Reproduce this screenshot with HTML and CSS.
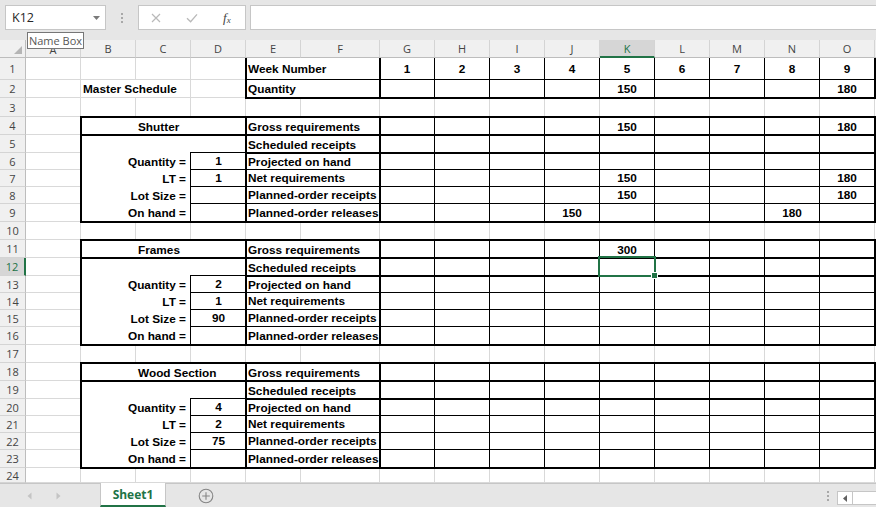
FILE: index.html
```html
<!DOCTYPE html>
<html>
<head>
<meta charset="utf-8">
<title>Sheet1</title>
<link rel="stylesheet" href="styles.css">
</head>
<body>
<div class="toolbar">
  <div class="namebox"><span>K12</span><svg class="caret" width="7" height="4" viewBox="0 0 7 4"><path d="M0 0h7L3.5 4z" fill="#7a7a7a"/></svg></div>
  <div class="grip"><i></i><i></i><i></i></div>
  <div class="fxbox">
    <svg class="ico-x" width="10" height="10" viewBox="0 0 10 10"><path d="M1 1l8 8M9 1l-8 8" stroke="#b9b9b9" stroke-width="1.2" fill="none"/></svg>
    <svg class="ico-ok" width="12" height="10" viewBox="0 0 12 10"><path d="M1 5.2l3.6 3.6L11 1.4" stroke="#b9b9b9" stroke-width="1.3" fill="none"/></svg>
    <span class="fx">f<sub>x</sub></span>
  </div>
  <div class="formula"></div>
  <div class="tip">Name Box</div>
</div>

<div class="sheet">
  <div class="corner"><svg width="8" height="8" viewBox="0 0 8 8"><path d="M8 0v8H0z" fill="#b5b5b5"/></svg></div>
  <div class="hd cA">A</div><div class="hd cB">B</div><div class="hd cC">C</div><div class="hd cD">D</div>
  <div class="hd cE">E</div><div class="hd cF">F</div><div class="hd cG">G</div><div class="hd cH">H</div>
  <div class="hd cI">I</div><div class="hd cJ">J</div><div class="hd cK on">K</div><div class="hd cL">L</div>
  <div class="hd cM">M</div><div class="hd cN">N</div><div class="hd cO">O</div><div class="hd cP"></div>

  <div class="rh y1">1</div><div class="rh y2">2</div><div class="rh y3">3</div><div class="rh y4">4</div>
  <div class="rh y5">5</div><div class="rh y6">6</div><div class="rh y7">7</div><div class="rh y8">8</div>
  <div class="rh y9">9</div><div class="rh y10">10</div><div class="rh y11">11</div><div class="rh y12 on">12</div>
  <div class="rh y13">13</div><div class="rh y14">14</div><div class="rh y15">15</div><div class="rh y16">16</div>
  <div class="rh y17">17</div><div class="rh y18">18</div><div class="rh y19">19</div><div class="rh y20">20</div>
  <div class="rh y21">21</div><div class="rh y22">22</div><div class="rh y23">23</div><div class="rh y24">24</div>

  <div class="hl y1"></div><div class="hl y2"></div><div class="hl y3"></div><div class="hl y4"></div>
  <div class="hl y5"></div><div class="hl y6"></div><div class="hl y7"></div><div class="hl y8"></div>
  <div class="hl y9"></div><div class="hl y10"></div><div class="hl y11"></div><div class="hl y12"></div>
  <div class="hl y13"></div><div class="hl y14"></div><div class="hl y15"></div><div class="hl y16"></div>
  <div class="hl y17"></div><div class="hl y18"></div><div class="hl y19"></div><div class="hl y20"></div>
  <div class="hl y21"></div><div class="hl y22"></div><div class="hl y23"></div><div class="hl y24"></div>

  <div class="vl cA"></div><div class="vl cB"></div><div class="vl cC"></div><div class="vl cD"></div>
  <div class="vl cE"></div><div class="vl cF"></div><div class="vl cG"></div><div class="vl cH"></div>
  <div class="vl cI"></div><div class="vl cJ"></div><div class="vl cK"></div><div class="vl cL"></div>
  <div class="vl cM"></div><div class="vl cN"></div><div class="vl cO"></div>

  <!-- Week table -->
  <div class="t cEF y1 bl2 br2 bb1 left">Week Number</div>
  <div class="t wk y1 br2 bb1"><span>1</span><span>2</span><span>3</span><span>4</span><span>5</span><span>6</span><span>7</span><span>8</span><span>9</span></div>
  <div class="t ms y2">Master Schedule</div>
  <div class="t cEF y2 bl2 br2 bb2 left">Quantity</div>
  <div class="t wk y2 br2 bb2"><span></span><span></span><span></span><span></span><span>150</span><span></span><span></span><span></span><span>180</span></div>

  <!-- Shutter -->
  <div class="t cBD y4 bl2 bt2 lbl">Shutter</div>
  <div class="t cEF y4 bl2 bt2 br2 left">Gross requirements</div>
  <div class="t wk y4 bt2 br2"><span></span><span></span><span></span><span></span><span>150</span><span></span><span></span><span></span><span>180</span></div>
  <div class="t cBD y5 bl2 bt2"></div>
  <div class="t cEF y5 bl2 bt2 br2 left">Scheduled receipts</div>
  <div class="t wk y5 bt2 br2"><span></span><span></span><span></span><span></span><span></span><span></span><span></span><span></span><span></span></div>
  <div class="t cBC y6 bl2 right">Quantity =</div>
  <div class="t cD y6 bl1 bt1 bb1 center">1</div>
  <div class="t cEF y6 bl2 bt2 br2 bb1 left">Projected on hand</div>
  <div class="t wk y6 bt2 br2 bb1"><span></span><span></span><span></span><span></span><span></span><span></span><span></span><span></span><span></span></div>
  <div class="t cBC y7 bl2 right">LT =</div>
  <div class="t cD y7 bl1 bb1 center">1</div>
  <div class="t cEF y7 bl2 br2 bb1 left">Net requirements</div>
  <div class="t wk y7 br2 bb1"><span></span><span></span><span></span><span></span><span>150</span><span></span><span></span><span></span><span>180</span></div>
  <div class="t cBC y8 bl2 right">Lot Size =</div>
  <div class="t cD y8 bl1 bb1 center"></div>
  <div class="t cEF y8 bl2 br2 bb1 left">Planned-order receipts</div>
  <div class="t wk y8 br2 bb1"><span></span><span></span><span></span><span></span><span>150</span><span></span><span></span><span></span><span>180</span></div>
  <div class="t cBC y9 bl2 bb2 right">On hand =</div>
  <div class="t cD y9 bl1 bb2 center"></div>
  <div class="t cEF y9 bl2 br2 bb2 left">Planned-order releases</div>
  <div class="t wk y9 br2 bb2"><span></span><span></span><span></span><span>150</span><span></span><span></span><span></span><span>180</span><span></span></div>

  <!-- Frames -->
  <div class="t cBD y11 bl2 bt2 lbl">Frames</div>
  <div class="t cEF y11 bl2 bt2 br2 left">Gross requirements</div>
  <div class="t wk y11 bt2 br2"><span></span><span></span><span></span><span></span><span>300</span><span></span><span></span><span></span><span></span></div>
  <div class="t cBD y12 bl2 bt2"></div>
  <div class="t cEF y12 bl2 bt2 br2 left">Scheduled receipts</div>
  <div class="t wk y12 bt2 br2"><span></span><span></span><span></span><span></span><span></span><span></span><span></span><span></span><span></span></div>
  <div class="t cBC y13 bl2 right">Quantity =</div>
  <div class="t cD y13 bl1 bt1 bb1 center">2</div>
  <div class="t cEF y13 bl2 bt2 br2 bb1 left">Projected on hand</div>
  <div class="t wk y13 bt2 br2 bb1"><span></span><span></span><span></span><span></span><span></span><span></span><span></span><span></span><span></span></div>
  <div class="t cBC y14 bl2 right">LT =</div>
  <div class="t cD y14 bl1 bb1 center">1</div>
  <div class="t cEF y14 bl2 br2 bb1 left">Net requirements</div>
  <div class="t wk y14 br2 bb1"><span></span><span></span><span></span><span></span><span></span><span></span><span></span><span></span><span></span></div>
  <div class="t cBC y15 bl2 right">Lot Size =</div>
  <div class="t cD y15 bl1 bb1 center">90</div>
  <div class="t cEF y15 bl2 br2 bb1 left">Planned-order receipts</div>
  <div class="t wk y15 br2 bb1"><span></span><span></span><span></span><span></span><span></span><span></span><span></span><span></span><span></span></div>
  <div class="t cBC y16 bl2 bb2 right">On hand =</div>
  <div class="t cD y16 bl1 bb2 center"></div>
  <div class="t cEF y16 bl2 br2 bb2 left">Planned-order releases</div>
  <div class="t wk y16 br2 bb2"><span></span><span></span><span></span><span></span><span></span><span></span><span></span><span></span><span></span></div>

  <!-- Wood Section -->
  <div class="t cBD y18 bl2 bt2 lbl">Wood Section</div>
  <div class="t cEF y18 bl2 bt2 br2 left">Gross requirements</div>
  <div class="t wk y18 bt2 br2"><span></span><span></span><span></span><span></span><span></span><span></span><span></span><span></span><span></span></div>
  <div class="t cBD y19 bl2 bt2"></div>
  <div class="t cEF y19 bl2 bt2 br2 left">Scheduled receipts</div>
  <div class="t wk y19 bt2 br2"><span></span><span></span><span></span><span></span><span></span><span></span><span></span><span></span><span></span></div>
  <div class="t cBC y20 bl2 right">Quantity =</div>
  <div class="t cD y20 bl1 bt1 bb1 center">4</div>
  <div class="t cEF y20 bl2 bt2 br2 bb1 left">Projected on hand</div>
  <div class="t wk y20 bt2 br2 bb1"><span></span><span></span><span></span><span></span><span></span><span></span><span></span><span></span><span></span></div>
  <div class="t cBC y21 bl2 right">LT =</div>
  <div class="t cD y21 bl1 bb1 center">2</div>
  <div class="t cEF y21 bl2 br2 bb1 left">Net requirements</div>
  <div class="t wk y21 br2 bb1"><span></span><span></span><span></span><span></span><span></span><span></span><span></span><span></span><span></span></div>
  <div class="t cBC y22 bl2 right">Lot Size =</div>
  <div class="t cD y22 bl1 bb1 center">75</div>
  <div class="t cEF y22 bl2 br2 bb1 left">Planned-order receipts</div>
  <div class="t wk y22 br2 bb1"><span></span><span></span><span></span><span></span><span></span><span></span><span></span><span></span><span></span></div>
  <div class="t cBC y23 bl2 bb2 right">On hand =</div>
  <div class="t cD y23 bl1 bb2 center"></div>
  <div class="t cEF y23 bl2 br2 bb2 left">Planned-order releases</div>
  <div class="t wk y23 br2 bb2"><span></span><span></span><span></span><span></span><span></span><span></span><span></span><span></span><span></span></div>

  <div class="sel"><i class="handle"></i></div>
</div>

<div class="tabbar">
  <div class="nav">
    <svg width="5" height="8" viewBox="0 0 5 8"><path d="M4.5 0.5v7L0.5 4z" fill="#c4c4c4"/></svg>
    <svg width="5" height="8" viewBox="0 0 5 8"><path d="M0.5 0.5v7L4.5 4z" fill="#c4c4c4"/></svg>
  </div>
  <div class="tab">Sheet1</div>
  <svg class="plus" width="16" height="16" viewBox="0 0 16 16"><circle cx="8" cy="8" r="6.8" fill="none" stroke="#858585" stroke-width="1.1"/><path d="M8 4.2v7.6M4.2 8h7.6" stroke="#858585" stroke-width="1.1"/></svg>
  <div class="spacer"></div>
  <div class="grip2"><i></i><i></i><i></i></div>
  <div class="hscroll"><div class="hbtn"><svg width="4" height="7" viewBox="0 0 4 7"><path d="M4 0v7L0 3.5z" fill="#606060"/></svg></div></div>
</div>
</body>
</html>
```

FILE: styles.css
```css
* { box-sizing: border-box; }
html, body { margin: 0; padding: 0; }
body {
  width: 876px;
  height: 507px;
  overflow: hidden;
  background: #fff;
  font-family: "Liberation Sans", Arial, sans-serif;
}

/* ---------- formula bar ---------- */
.toolbar {
  position: relative;
  height: 40px;
  background: #e6e6e6;
  display: flex;
  align-items: flex-start;
  padding: 5px 0 0 5px;
}
.namebox {
  width: 101px;
  height: 25px;
  background: #fff;
  border: 1px solid #c6c6c6;
  display: flex;
  align-items: center;
  justify-content: space-between;
  padding: 0 5px 0 6px;
  font: 12.5px "Open Sans", sans-serif;
  color: #262626;
}
.grip {
  width: 32px;
  height: 25px;
  display: flex;
  flex-direction: column;
  align-items: center;
  justify-content: center;
  gap: 2px;
}
.grip i { display: block; width: 2px; height: 2px; background: #a8a8a8; }
.fxbox {
  width: 108px;
  height: 25px;
  background: #fff;
  border: 1px solid #c6c6c6;
  display: flex;
  align-items: center;
  padding-left: 12px;
}
.ico-ok { margin-left: 25px; }
.fx {
  margin-left: 25px;
  font: italic 13px "Liberation Serif", serif;
  color: #444;
}
.fx sub { font-size: 9px; vertical-align: -1px; }
.formula {
  flex: 1;
  height: 25px;
  margin-left: 4px;
  background: #fff;
  border: 1px solid #c6c6c6;
  border-right: 0;
}
.tip {
  position: absolute;
  left: 27px;
  top: 32px;
  width: 57px;
  height: 17px;
  background: #fff;
  border: 1px solid #767676;
  font: 11px "Open Sans", sans-serif;
  white-space: nowrap;
  color: #575757;
  display: flex;
  align-items: center;
  justify-content: center;
  z-index: 10;
}

/* ---------- grid ---------- */
.sheet {
  display: grid;
  grid-template-columns: 26px repeat(5, 55px) 79px repeat(9, 55px) 1fr;
  grid-template-rows: 18px 22px 18px 19px 18px 18px 17px 17px 17px 18px 18px 18px 18px 17px 17px 17px 18px 18px 18px 18px 17px 17px 17px 18px 15px;
  height: 443px;
  overflow: hidden;
}

.cA { grid-column: 2; } .cB { grid-column: 3; } .cC { grid-column: 4; } .cD { grid-column: 5; }
.cE { grid-column: 6; } .cF { grid-column: 7; } .cG { grid-column: 8; } .cH { grid-column: 9; }
.cI { grid-column: 10; } .cJ { grid-column: 11; } .cK { grid-column: 12; } .cL { grid-column: 13; }
.cM { grid-column: 14; } .cN { grid-column: 15; } .cO { grid-column: 16; } .cP { grid-column: 17; }
.cBD { grid-column: 3 / 6; }
.cBC { grid-column: 3 / 5; }
.cEF { grid-column: 6 / 8; }
.wk { grid-column: 8 / 17; }
.ms { grid-column: 3 / 5; }

.y1 { grid-row: 2; } .y2 { grid-row: 3; } .y3 { grid-row: 4; } .y4 { grid-row: 5; }
.y5 { grid-row: 6; } .y6 { grid-row: 7; } .y7 { grid-row: 8; } .y8 { grid-row: 9; }
.y9 { grid-row: 10; } .y10 { grid-row: 11; } .y11 { grid-row: 12; } .y12 { grid-row: 13; }
.y13 { grid-row: 14; } .y14 { grid-row: 15; } .y15 { grid-row: 16; } .y16 { grid-row: 17; }
.y17 { grid-row: 18; } .y18 { grid-row: 19; } .y19 { grid-row: 20; } .y20 { grid-row: 21; }
.y21 { grid-row: 22; } .y22 { grid-row: 23; } .y23 { grid-row: 24; } .y24 { grid-row: 25; }

.corner {
  grid-row: 1;
  grid-column: 1;
  background: #f0f0f0;
  border-right: 1px solid #bdbdbd;
  border-bottom: 1px solid #bdbdbd;
  display: flex;
  align-items: flex-end;
  justify-content: flex-end;
  padding: 0 3px 3px 0;
}
.hd {
  grid-row: 1;
  background: #f0f0f0;
  border-right: 1px solid #d4d4d4;
  border-bottom: 1px solid #bdbdbd;
  display: flex;
  align-items: center;
  justify-content: center;
  font: 11px "Open Sans", sans-serif;
  color: #444;
}
.hd.cA { align-items: flex-end; }
.hd.cP { border-right: 0; }
.hd.on {
  background: #d6d6d6;
  color: #217346;
  border-bottom: 2px solid #217346;
}
.rh {
  grid-column: 1;
  background: #f0f0f0;
  border-right: 1px solid #bdbdbd;
  border-bottom: 1px solid #d4d4d4;
  display: flex;
  align-items: center;
  justify-content: center;
  font: 11px "Open Sans", sans-serif;
  color: #444;
}
.rh.on {
  background: #d6d6d6;
  color: #217346;
  border-right: 2px solid #217346;
}

.hl { grid-column: 2 / -1; border-bottom: 1px solid #d9d9d9; }
.vl { grid-row: 2 / -1; border-right: 1px solid #d9d9d9; }

/* ---------- cells ---------- */
.t {
  display: flex;
  align-items: center;
  background: #fff;
  border: 0 solid #000;
  font-weight: bold;
  font-size: 11.8px;
  color: #000;
  white-space: nowrap;
  min-width: 0;
}
.left { padding-left: 1px; }
.right { justify-content: flex-end; padding-right: 5px; }
.center { justify-content: center; }
.lbl { padding-left: 56px; }
.ms { padding-left: 2px; margin: 0 1px 1px 0; }

.bl1 { border-left-width: 1px; margin-left: -1px; }
.bl2 { border-left-width: 2px; margin-left: -1px; }
.bt1 { border-top-width: 1px; margin-top: -1px; }
.bt2 { border-top-width: 2px; margin-top: -1px; }
.br2 { border-right-width: 2px; margin-right: -1px; }
.bb1 { border-bottom-width: 1px; }
.bb2 { border-bottom-width: 2px; margin-bottom: -1px; }

.wk {
  display: grid;
  grid-template-columns: repeat(8, 55px) 1fr;
  align-items: stretch;
  background: transparent;
}
.wk span {
  display: flex;
  align-items: center;
  justify-content: center;
  border-right: 1px solid #000;
}
.wk span:last-child { border-right: 0; }

.sel {
  grid-row: 13;
  grid-column: 12;
  margin: -2px -1px -1px -2px;
  border: 2px solid #217346;
  position: relative;
  z-index: 5;
}
.handle {
  position: absolute;
  right: -3px;
  bottom: -3px;
  width: 5px;
  height: 5px;
  background: #217346;
  outline: 1px solid #fff;
}

/* ---------- sheet tabs ---------- */
.tabbar {
  height: 24px;
  background: #e6e6e6;
  border-top: 1px solid #c6c6c6;
  display: flex;
  align-items: stretch;
}
.nav {
  width: 100px;
  display: flex;
  align-items: center;
  padding-left: 27px;
  gap: 24px;
}
.tab {
  width: 66px;
  background: #fff;
  border-left: 1px solid #c6c6c6;
  border-right: 1px solid #c6c6c6;
  border-bottom: 2px solid #217346;
  margin-top: -1px;
  display: flex;
  align-items: center;
  justify-content: center;
  font: bold 12px "Open Sans", sans-serif;
  color: #217346;
}
.plus { align-self: center; margin-left: 32px; }
.spacer { flex: 1; }
.grip2 {
  width: 18px;
  display: flex;
  flex-direction: column;
  align-items: center;
  justify-content: center;
  gap: 2px;
}
.grip2 i { display: block; width: 2px; height: 2px; background: #a8a8a8; }
.hscroll {
  width: 39px;
  height: 14px;
  align-self: flex-start;
  margin-top: 7px;
  background: #fff;
  border: 1px solid #c6c6c6;
  border-right: 0;
  display: flex;
}
.hbtn {
  width: 15px;
  border-right: 1px solid #c6c6c6;
  display: flex;
  align-items: center;
  justify-content: center;
}
```
